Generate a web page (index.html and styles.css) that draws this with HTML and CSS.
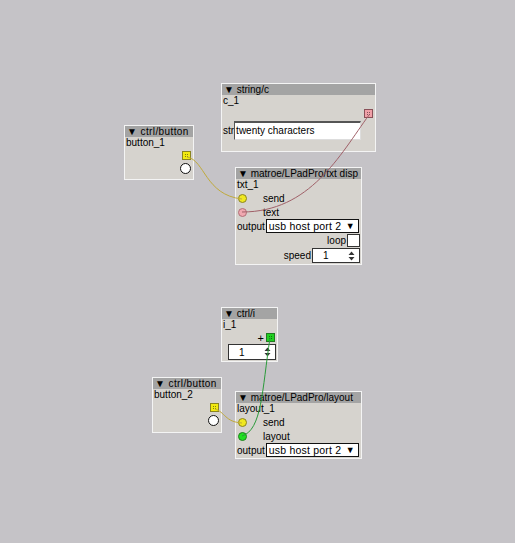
FILE: index.html
```html
<!DOCTYPE html>
<html>
<head>
<meta charset="utf-8">
<link rel="stylesheet" href="styles.css">
</head>
<body>
<div class="canvas">

  <div class="node n-string">
    <div class="hdr">▼ string/c</div>
    <div class="name">c_1</div>
    <div class="out-row"><span class="sq sq-pink"></span></div>
    <div class="str-row"><span class="lbl">str</span><span class="textbox">twenty characters</span></div>
  </div>

  <div class="node n-btn1">
    <div class="hdr wide-hdr">▼ ctrl/button</div>
    <div class="name">button_1</div>
    <div class="out-row"><span class="sq sq-yellow"></span></div>
    <div class="btn-row"><span class="btn"></span></div>
  </div>

  <div class="node n-txt">
    <div class="hdr">▼ matroe/LPadPro/txt disp</div>
    <div class="name">txt_1</div>
    <div class="in-row"><span class="dot dot-yellow"></span><span class="in-lbl">send</span></div>
    <div class="in-row"><span class="dot dot-pink"></span><span class="in-lbl">text</span></div>
    <div class="param-row"><span class="lbl">output</span><span class="combo"><span>usb host port 2</span><span class="arrow">▼</span></span></div>
    <div class="param-row right"><span class="lbl">loop</span><span class="check"></span></div>
    <div class="param-row right"><span class="lbl">speed</span><span class="numbox"><span class="num">1</span><svg class="spin" width="7" height="10" viewBox="0 0 7 10"><path d="M3.5 0.5 L6.5 4 L0.5 4 Z M3.5 9.5 L6.5 6 L0.5 6 Z" fill="#333"/></svg></span></div>
  </div>

  <div class="node n-int">
    <div class="hdr">▼ ctrl/i</div>
    <div class="name">i_1</div>
    <div class="out-row"><span class="plus">+</span><span class="sq sq-green"></span></div>
    <div class="int-row"><span class="numbox int-box"><span class="num">1</span><svg class="spin" width="7" height="10" viewBox="0 0 7 10"><path d="M3.5 0.5 L6.5 4 L0.5 4 Z M3.5 9.5 L6.5 6 L0.5 6 Z" fill="#333"/></svg></span></div>
  </div>

  <div class="node n-btn2">
    <div class="hdr wide-hdr">▼ ctrl/button</div>
    <div class="name">button_2</div>
    <div class="out-row"><span class="sq sq-yellow"></span></div>
    <div class="btn-row"><span class="btn"></span></div>
  </div>

  <div class="node n-layout">
    <div class="hdr">▼ matroe/LPadPro/layout</div>
    <div class="name">layout_1</div>
    <div class="in-row"><span class="dot dot-yellow"></span><span class="in-lbl">send</span></div>
    <div class="in-row"><span class="dot dot-green"></span><span class="in-lbl">layout</span></div>
    <div class="param-row"><span class="lbl">output</span><span class="combo"><span>usb host port 2</span><span class="arrow">▼</span></span></div>
  </div>

  <svg class="wires" width="515" height="543" viewBox="0 0 515 543">
    <path d="M187 157 C 205 160, 205 195, 242 199" stroke="#c0aa3c" stroke-width="1" fill="none"/>
    <path d="M369 115 C 340 155, 310 212, 242 212" stroke="#a06068" stroke-width="1" fill="none"/>
    <path d="M270 338 C 262 390, 262 430, 242 436" stroke="#2a9a3a" stroke-width="1" fill="none"/>
    <path d="M215 409 C 225 412, 225 422, 242 423" stroke="#c0aa3c" stroke-width="1" fill="none"/>
  </svg>
</div>
</body>
</html>
```
FILE: styles.css
```css
html, body {
  margin: 0;
  padding: 0;
  background: #c5c3c7;
}
.canvas {
  position: relative;
  width: 515px;
  height: 543px;
  background: #c5c3c7;
  font-family: "Liberation Sans", Arial, sans-serif;
  font-size: 10px;
  color: #000;
  overflow: hidden;
}
.node {
  position: absolute;
  box-sizing: border-box;
  background: #d6d3ce;
  border: 1px solid #f4f4f4;
  display: flex;
  flex-direction: column;
}
.hdr {
  background: #a4a4a4;
  height: 11px;
  line-height: 11px;
  padding-left: 2px;
  white-space: nowrap;
  overflow: hidden;
}
.wide-hdr { letter-spacing: 0.4px; }
.name {
  height: 12px;
  line-height: 12px;
  padding-left: 1px;
}
.n-string { left: 221px; top: 83px; width: 155px; height: 69px; }
.n-btn1 { left: 124px; top: 125px; width: 70px; height: 55px; }
.n-txt { left: 235px; top: 167px; width: 127px; height: 98px; }
.n-int { left: 221px; top: 307px; width: 57px; height: 55px; }
.n-btn2 { left: 152px; top: 377px; width: 70px; height: 56px; }
.n-layout { left: 235px; top: 391px; width: 127px; height: 68px; }

.out-row {
  display: flex;
  justify-content: flex-end;
  align-items: center;
  height: 13px;
  padding-right: 2px;
}
.sq {
  position: relative;
  width: 7px;
  height: 7px;
  border: 1px solid #555;
  box-sizing: content-box;
}
.sq::after {
  content: "";
  position: absolute;
  left: 2px;
  top: 2px;
  width: 1px;
  height: 1px;
  border: 1px dotted rgba(0, 0, 0, 0.45);
}
.sq-yellow { background: #f2ea10; border-color: #8a8420; }
.sq-pink { background: #f0a0a8; border-color: #8a5058; }
.sq-green { background: #20d020; border-color: #207a20; }
.plus { margin-right: 2px; font-size: 11px; line-height: 10px; color: #000; }

.str-row {
  display: flex;
  align-items: center;
  height: 21px;
  padding-left: 1px;
}
.textbox {
  box-sizing: border-box;
  width: 127px;
  height: 19px;
  background: #fff;
  border-top: 2px solid #555;
  border-left: 1px solid #555;
  border-right: 1px solid #ddd;
  border-bottom: 1px solid #ddd;
  line-height: 16px;
  padding-left: 1px;
  font-size: 10px;
}
.lbl { white-space: nowrap; }

.btn-row {
  display: flex;
  justify-content: flex-end;
  padding-right: 2px;
  padding-top: 1px;
}
.btn {
  width: 9px;
  height: 9px;
  border-radius: 50%;
  background: #fff;
  border: 1px solid #111;
}

.in-row {
  display: flex;
  align-items: center;
  height: 14px;
  padding-left: 2px;
}
.dot {
  width: 7px;
  height: 7px;
  border-radius: 50%;
  border: 1px solid #666;
}
.dot-yellow { background: #f0e820; border-color: #8a8420; }
.dot-pink { background: #f0a8b0; border-color: #b07078; }
.dot-green { background: #20e020; border-color: #208020; }
.in-lbl { margin-left: 16px; }

.param-row {
  display: flex;
  align-items: center;
  height: 14px;
  padding-left: 1px;
  padding-right: 1px;
}
.param-row.right { justify-content: flex-end; height: 15px; }
.combo {
  box-sizing: border-box;
  display: flex;
  justify-content: space-between;
  align-items: center;
  width: 93px;
  height: 14px;
  margin-left: 1px;
  background: #fff;
  border: 1px solid #111;
  padding: 0 3px 0 2px;
  font-size: 10.5px;
  letter-spacing: 0.2px;
}
.arrow { font-size: 9px; }
.check {
  box-sizing: border-box;
  width: 13px;
  height: 13px;
  background: #fff;
  border: 1px solid #333;
  margin-left: 1px;
}
.numbox {
  box-sizing: border-box;
  display: flex;
  align-items: center;
  width: 48px;
  height: 15px;
  background: #fff;
  border: 1px solid #333;
  margin-left: 1px;
}
.num { flex: 1; padding-left: 10px; }
.spin { margin-right: 4px; }
.int-row {
  display: flex;
  padding-left: 5px;
}
.int-box { height: 16px; }

.wires {
  position: absolute;
  left: 0;
  top: 0;
  pointer-events: none;
}
```
